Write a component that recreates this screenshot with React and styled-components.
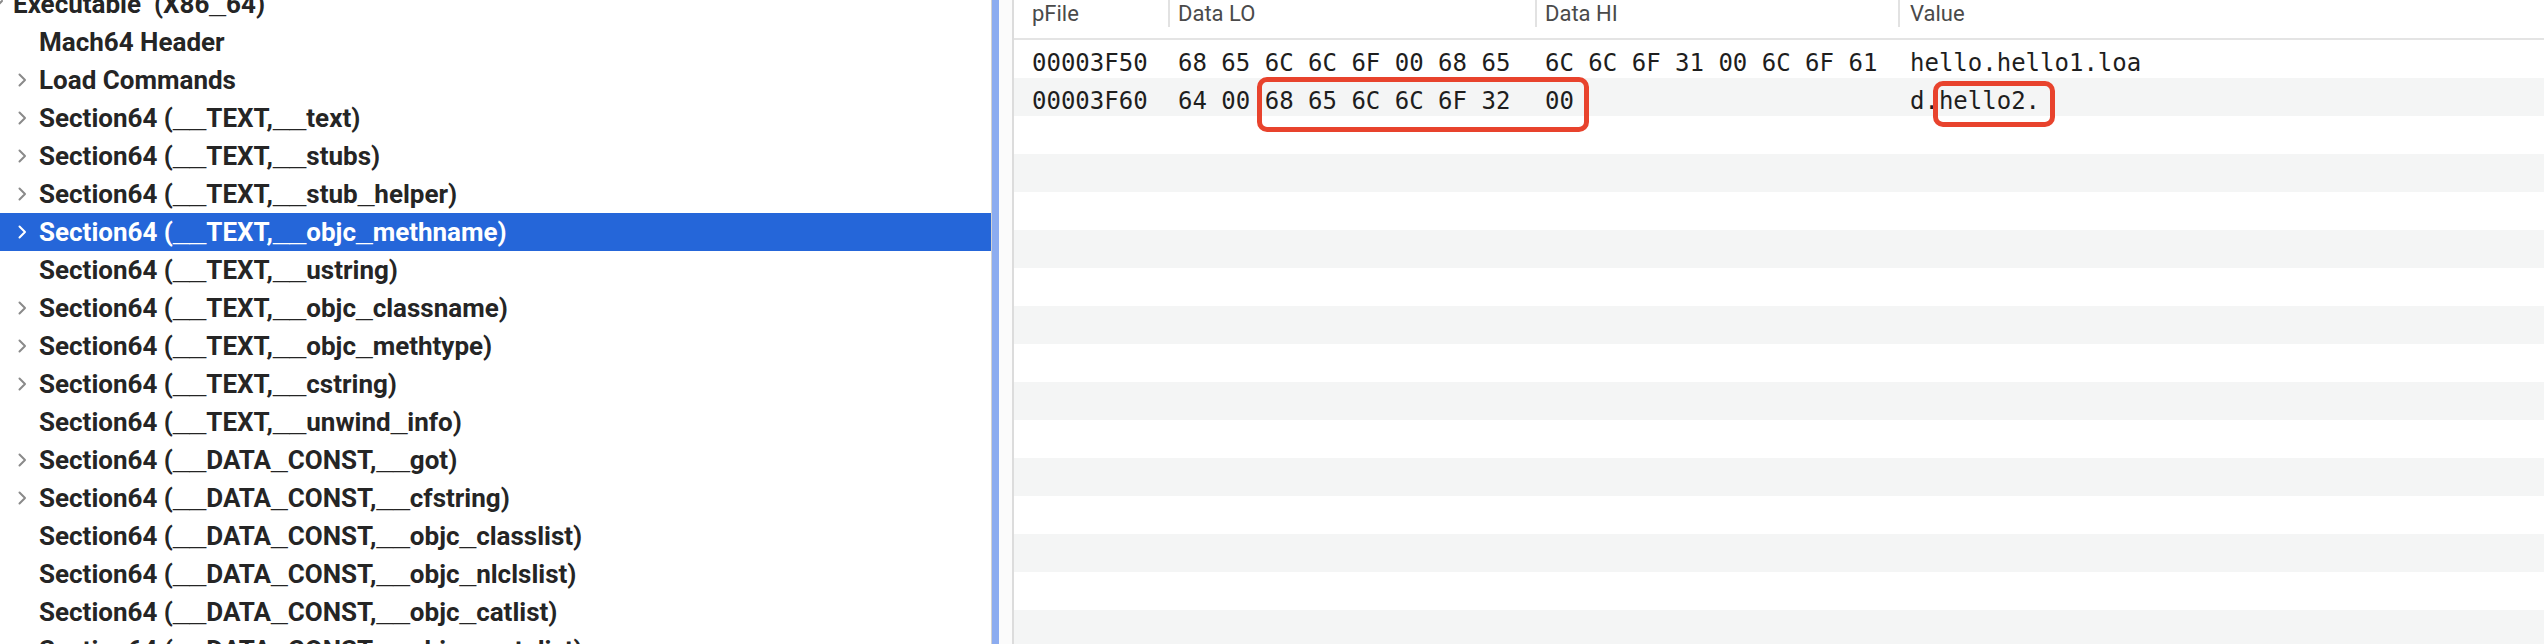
import React from "react";
import styled, { createGlobalStyle } from "styled-components";

const Global = createGlobalStyle`
  html, body { margin: 0; padding: 0; background: #ffffff; overflow: hidden; }
  #root { width: 2544px; height: 644px; }
`;

const Window = styled.div`
  display: flex;
  width: 2544px;
  height: 644px;
  overflow: hidden;
  background: #ffffff;
`;

const Sidebar = styled.div`
  width: 991px;
  flex: none;
  height: 100%;
  overflow: hidden;
  background: #ffffff;
`;

const TreeList = styled.div`
  display: flex;
  flex-direction: column;
  margin-top: -15px;
`;

const TreeRow = styled.div`
  display: flex;
  align-items: center;
  height: 38px;
  flex: none;
  background: ${(p) => (p.$selected ? "#2566d9" : "transparent")};
  color: ${(p) => (p.$selected ? "#ffffff" : "#252525")};
  font-family: Roboto, "Liberation Sans", sans-serif;
  font-weight: 700;
  font-size: 26px;
  white-space: pre;
`;

const Disclosure = styled.div`
  width: 26px;
  flex: none;
  display: flex;
  align-items: center;
  padding-left: 5px;
  box-sizing: border-box;
  margin-left: ${(p) => p.$level * 26 - 13}px;
  color: ${(p) => (p.$selected ? "#ffffff" : "#8a8a8a")};
`;

const Label = styled.span`
  line-height: 30px;
`;

const Underscore = styled.span`
  font-family: "Liberation Sans", Arial, sans-serif;
  font-size: 30px;
  line-height: 26px;
`;

const SplitHandle = styled.div`
  width: 23px;
  flex: none;
  height: 100%;
  display: flex;
  box-sizing: border-box;
  border-left: 1px solid #d2d2d2;
  border-right: 2px solid #dcdcdc;
  background: #fbfbfb;
`;

const HandleBar = styled.div`
  width: 7px;
  height: 100%;
  background: #8cacf0;
`;

const Table = styled.div`
  flex: 1;
  height: 100%;
  position: relative;
  overflow: hidden;
  display: flex;
  flex-direction: column;
`;

const HeaderRow = styled.div`
  display: grid;
  grid-template-columns: 154px 367px 363px 1fr;
  height: 38px;
  flex: none;
  border-bottom: 2px solid #e4e4e4;
`;

const HeaderCell = styled.div`
  position: relative;
  padding-left: ${(p) => p.$pad}px;
  font-family: Roboto, "Liberation Sans", sans-serif;
  font-size: 22px;
  line-height: 28px;
  color: #4a4a4a;
  border-left: ${(p) => (p.$sep ? "2px solid #e2e2e2" : "none")};
  height: 27px;
  box-sizing: border-box;
`;

const DataRow = styled.div`
  display: grid;
  grid-template-columns: 154px 367px 363px 1fr;
  height: 38px;
  flex: none;
  background: ${(p) => (p.$alt ? "#f4f5f5" : "#ffffff")};
`;

const DataCell = styled.div`
  display: flex;
  align-items: center;
  padding-left: ${(p) => p.$pad}px;
  padding-top: 8px;
  box-sizing: border-box;
  font-family: "DejaVu Sans Mono", "Liberation Mono", monospace;
  font-size: 24px;
  color: #1e1e1e;
  white-space: pre;
`;

const Callout = styled.div`
  position: absolute;
  box-sizing: border-box;
  border: 5px solid #e8432d;
  border-radius: 10px;
  pointer-events: none;
`;

const Chevron = ({ down }) => (
  <svg
    width="9"
    height="14"
    viewBox="0 0 9 14"
    style={{ transform: down ? "rotate(90deg)" : "none", display: "block" }}
  >
    <path
      d="M1.5 1.5 L7 7 L1.5 12.5"
      fill="none"
      stroke="currentColor"
      strokeWidth="2"
      strokeLinecap="round"
      strokeLinejoin="round"
    />
  </svg>
);

const renderLabel = (text) =>
  text.split(/(_+)/).map((part, i) =>
    part.startsWith("_") ? <Underscore key={i}>{part}</Underscore> : part
  );

const tree = [
  { label: "Executable  (X86_64)", level: 0, chevron: "down" },
  { label: "Mach64 Header", level: 1 },
  { label: "Load Commands", level: 1, chevron: "right" },
  { label: "Section64 (__TEXT,__text)", level: 1, chevron: "right" },
  { label: "Section64 (__TEXT,__stubs)", level: 1, chevron: "right" },
  { label: "Section64 (__TEXT,__stub_helper)", level: 1, chevron: "right" },
  { label: "Section64 (__TEXT,__objc_methname)", level: 1, chevron: "right", selected: true },
  { label: "Section64 (__TEXT,__ustring)", level: 1 },
  { label: "Section64 (__TEXT,__objc_classname)", level: 1, chevron: "right" },
  { label: "Section64 (__TEXT,__objc_methtype)", level: 1, chevron: "right" },
  { label: "Section64 (__TEXT,__cstring)", level: 1, chevron: "right" },
  { label: "Section64 (__TEXT,__unwind_info)", level: 1 },
  { label: "Section64 (__DATA_CONST,__got)", level: 1, chevron: "right" },
  { label: "Section64 (__DATA_CONST,__cfstring)", level: 1, chevron: "right" },
  { label: "Section64 (__DATA_CONST,__objc_classlist)", level: 1 },
  { label: "Section64 (__DATA_CONST,__objc_nlclslist)", level: 1 },
  { label: "Section64 (__DATA_CONST,__objc_catlist)", level: 1 },
  { label: "Section64 (__DATA_CONST,__objc_protolist)", level: 1 },
];

const columns = [
  { title: "pFile", pad: 18, sep: false },
  { title: "Data LO", pad: 8, sep: true },
  { title: "Data HI", pad: 8, sep: true },
  { title: "Value", pad: 10, sep: true },
];

const data = [
  ["00003F50", "68 65 6C 6C 6F 00 68 65", "6C 6C 6F 31 00 6C 6F 61", "hello.hello1.loa"],
  ["00003F60", "64 00 68 65 6C 6C 6F 32", "00", "d.hello2."],
];

const ROWS = 16;
const cellPads = [18, 10, 10, 12];

export default function App() {
  const rows = Array.from({ length: ROWS }, (_, i) => data[i] || ["", "", "", ""]);
  return (
    <>
      <Global />
      <Window>
        <Sidebar>
          <TreeList>
            {tree.map((item, i) => (
              <TreeRow key={i} $selected={item.selected}>
                <Disclosure $level={item.level} $selected={item.selected}>
                  {item.chevron && <Chevron down={item.chevron === "down"} />}
                </Disclosure>
                <Label>{renderLabel(item.label)}</Label>
              </TreeRow>
            ))}
          </TreeList>
        </Sidebar>
        <SplitHandle>
          <HandleBar />
        </SplitHandle>
        <Table>
          <HeaderRow>
            {columns.map((c) => (
              <HeaderCell key={c.title} $pad={c.pad} $sep={c.sep}>
                {c.title}
              </HeaderCell>
            ))}
          </HeaderRow>
          {rows.map((r, i) => (
            <DataRow key={i} $alt={i % 2 === 1}>
              {r.map((v, j) => (
                <DataCell key={j} $pad={cellPads[j]}>
                  {v}
                </DataCell>
              ))}
            </DataRow>
          ))}
          <Callout style={{ left: 243, top: 77, width: 332, height: 55 }} />
          <Callout style={{ left: 919, top: 81, width: 122, height: 46 }} />
        </Table>
      </Window>
    </>
  );
}
